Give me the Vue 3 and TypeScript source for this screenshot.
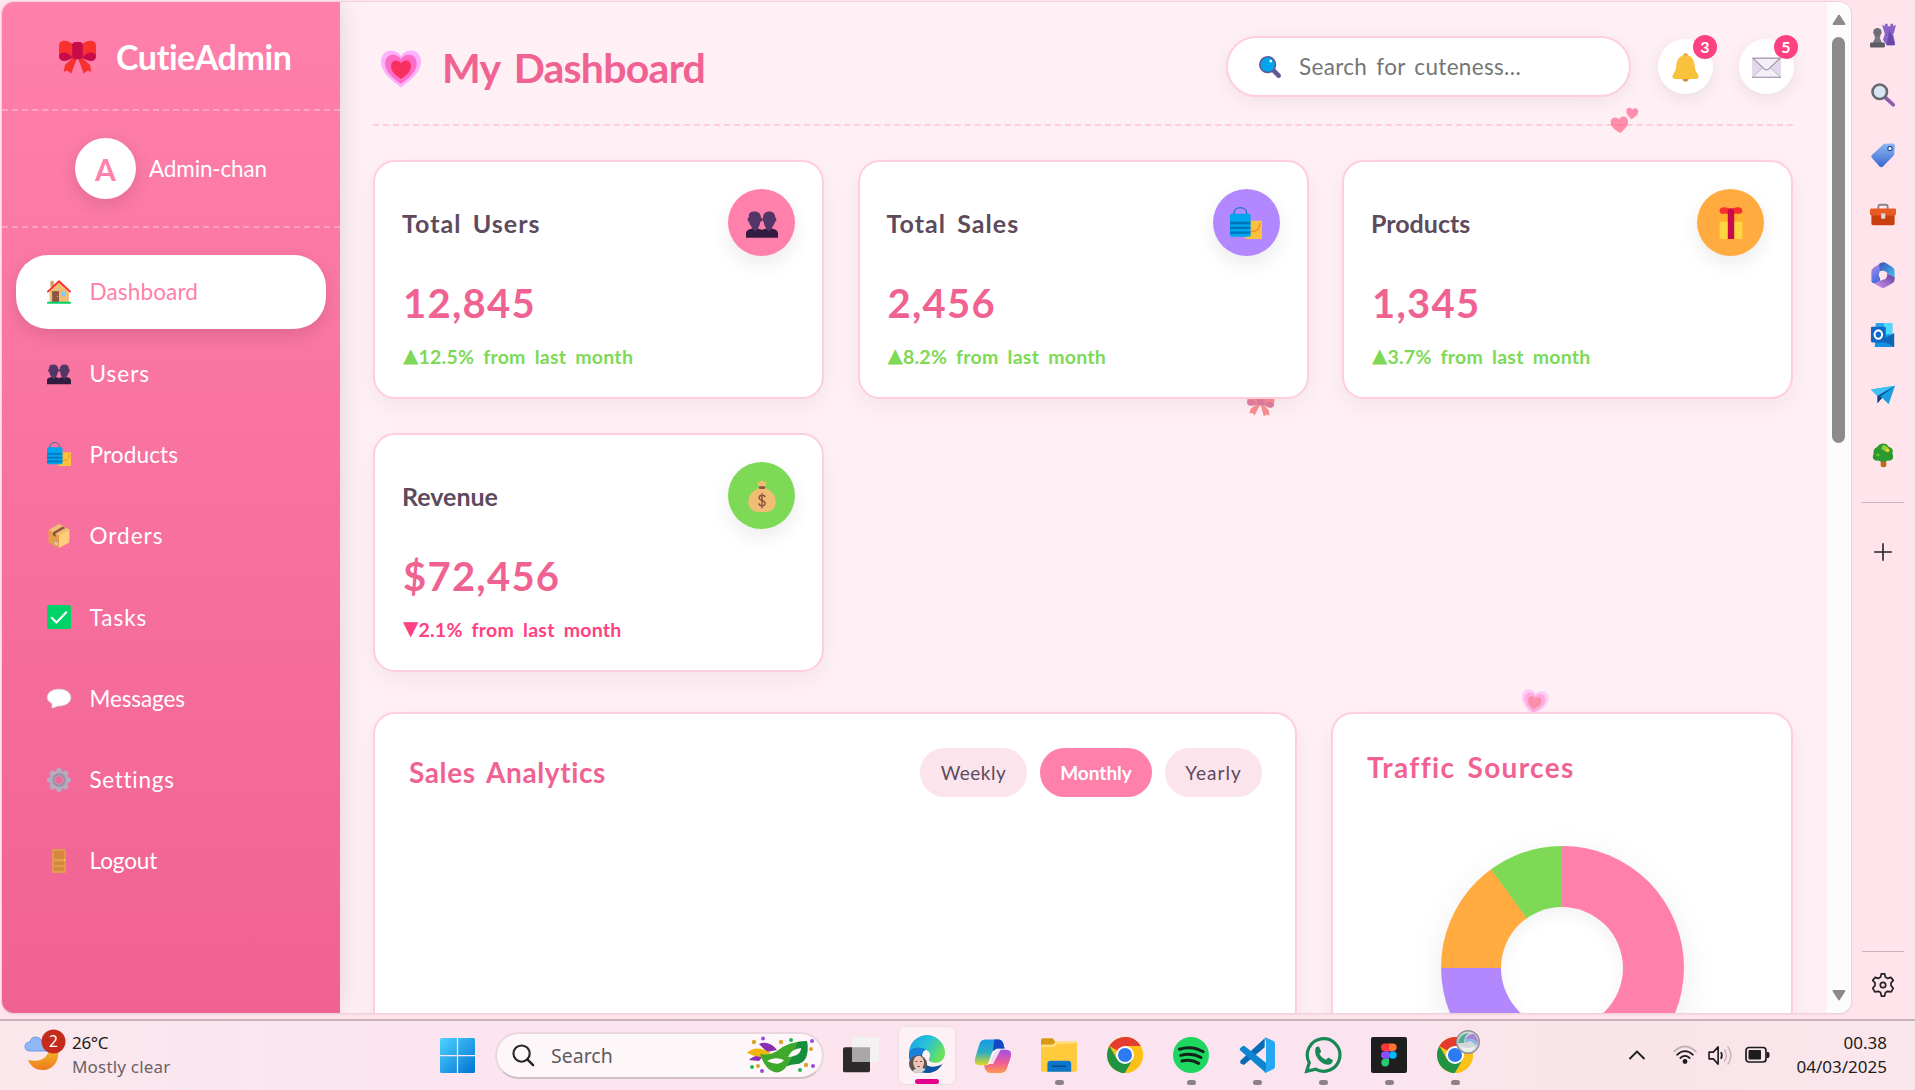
<script setup lang="ts">
interface NavItem { label: string; icon: string; active?: boolean; spacing: string }
interface Stat { title: string; value: string; change: string; up: boolean; icon: string; tone: string }
interface App { icon: string; running: boolean }

const heart = 'M14 26C6 20 0 15 0 8C0 3 3 0 7 0C10 0 12.5 1.5 14 4C15.5 1.5 18 0 21 0C25 0 28 3 28 8C28 15 22 20 14 26z'
const chromeBody = `
  <circle cx="14" cy="14" r="14" fill="#fbc116"/>
  <path d="M14 14L1.9 7A14 14 0 0 1 26.1 7z" fill="#e33b2e"/>
  <path d="M14 0A14 14 0 0 1 26.1 7H14z" fill="#e33b2e"/>
  <path d="M1.9 7A14 14 0 0 0 14 28L20.1 17.5 14 14 7.9 17.5z" fill="#229342"/>
  <path d="M20.1 17.5L14 28A14 14 0 0 0 26.1 7H14z" fill="#fbc116"/>
  <circle cx="14" cy="14" r="7" fill="#fff"/><circle cx="14" cy="14" r="5.5" fill="#2c7bf0"/>`

// Glyphs are drawn on a 28 × 28 grid.
const icons: Record<string, string> = {
  bow: `
    <path d="M10.5 15L4.5 20.5 3.5 25.5 6.5 24.6 9.2 27 13.8 15zM17.5 15L23.5 20.5 24.5 25.5 21.5 24.6 18.8 27 14.2 15z" fill="#f8312f"/>
    <path d="M0 6C0 3 2 2 4 2C7 2 9 3.6 11 5V14L4 16 0 14zM28 6C28 3 26 2 24 2C21 2 19 3.6 17 5V14L24 16 28 14z" fill="#f8312f"/>
    <path d="M0 14C0 12 2 11 4 11C7 11 8 13 11 15C8 16 7 17.400 4 17.400C1.500 17.400 0 16 0 14zM28 14C28 12 26 11 24 11C21 11 20 13 17 15C20 16 21 17.400 24 17.400C26.500 17.400 28 16 28 14z" fill="#ca0b4a"/>
    <rect x="10" y="3" width="8" height="13" rx="2.500" fill="#ca0b4a"/>`,
  heart: `<path d="${heart}" fill="#fcb1ff" transform="translate(0 1)"/><path d="${heart}" fill="#ff6dc6" transform="translate(2.9 4) scale(.79)"/><path d="${heart}" fill="#f92f60" transform="translate(7 8) scale(.5)"/>`,
  hearts: `<path d="${heart}" fill="#ff2e63" transform="translate(0 10) rotate(-6 9 8) scale(.62)"/><path d="${heart}" fill="#ff2e63" transform="translate(15 1) rotate(6 6 6) scale(.43)"/>`,
  house: `
    <path d="M4 1H8V8H4z" fill="#d9a05b"/><path d="M14 1.500L25.500 13V26H3V13z" fill="#f1bd75"/>
    <path d="M6 13H14V26H6z" fill="#8c5543"/><path d="M16.500 13.500H22V19H16.500z" fill="#83cbff"/>
    <path d="M1 13.500L14 1.500 27 13.500" fill="none" stroke="#f8312f" stroke-width="2.200" stroke-linecap="round" stroke-linejoin="round"/>
    <rect x="0" y="25.500" width="28" height="2.200" rx="1" fill="#00d26a"/><circle cx="12.500" cy="19" r=".7" fill="#f9c23c"/>`,
  users: `
    <path d="M0 27V23C0 20 3 19 8 18.500C11 19 13 19.500 14 20C15 19.500 17 19 20 18.500C25 19 28 20 28 23V27z" fill="#321b41"/>
    <path d="M2.500 8C2.500 5 4.500 4 7.500 4C11 4 13 6 13 9C15 10 14 13 12.500 13C12.500 16 10.500 18 10.500 19L8 21.500 5.500 19C5 17 3 16 2.700 13C1 12.500 1 10 2.500 9zM15 9C15 6 17 4 20.500 4C24 4 25.500 6 25.500 9C27 10 27 12.500 25.300 13C25 16 23 17 22.500 19L20 21.500 17.500 19C17.500 18 15.500 16 15.500 13C14 12.500 14 10 15 9z" fill="#533566"/>`,
  bags: `
    <path d="M13 12H28V27.500C28 28 27.500 28 27 28H14.500L13 27z" fill="#f9c23c"/><path d="M18 20.500C22 23 26 20 26 14" fill="none" stroke="#ff822d" stroke-width="1.100"/>
    <path d="M3.500 8V5C3.500-.8 14.500-.8 14.500 5V8" fill="none" stroke="#0074ba" stroke-width="1"/>
    <rect y="6" width="18" height="20" rx="1.200" fill="#00a6ed"/><path d="M0 13h18v2H0zM0 17.200h18v2H0zM0 21.500h18v2H0z" fill="#0074ba"/>`,
  box: `
    <path d="M14 0L26 6.500V21L14 28 2 21.500V7z" fill="#f3ad61"/><path d="M14 13L26 6.500V21.500L14 28z" fill="#ffce7c"/><path d="M2 7L14 13V28L2 21.500z" fill="#e39d4b"/>
    <path d="M14 0L26 6.500 14 13 2 7z" fill="#f1bd75"/><path d="M7 9.500L18.500 3 21.500 4.700 10 11V15L7 13.500z" fill="#8c5543"/><path d="M9 20.500l3.500 1.800v3L9 23.600z" fill="#d3d3d3"/>`,
  check: `<rect width="28" height="28" rx="3" fill="#00d26a"/><path d="M5.500 15L11 20.500 22.500 8.500" fill="none" stroke="#fff" stroke-width="2.500" stroke-linecap="round" stroke-linejoin="round"/>`,
  bubble: `<path d="M14 3.500C22 3.500 28 7.500 28 13.500C28 19.500 22 23.500 14 23.500C11 23.500 9.500 25.500 5.500 26V20.500C2 18.500 0 16.500 0 13.500C0 7.500 6 3.500 14 3.500z" fill="#fff" stroke="#c9a8b4" stroke-width=".8"/>`,
  gear: `
    <g fill="#b4acbc"><circle cx="14" cy="14" r="11"/><rect x="10.800" y="0" width="6.400" height="28" rx="2.500"/><rect x="0" y="10.800" width="28" height="6.400" rx="2.500"/>
    <g transform="rotate(45 14 14)"><rect x="10.800" y="0" width="6.400" height="28" rx="2.500"/><rect x="0" y="10.800" width="28" height="6.400" rx="2.500"/></g></g>
    <circle cx="14" cy="14" r="6.500" fill="#f3669a" stroke="#998ea4" stroke-width="2.600"/><circle cx="14" cy="14" r="5" fill="none" stroke="#b4acbc" stroke-width="1"/>`,
  door: `<rect x="6" width="16" height="28" rx="1.500" fill="#e39d4b"/><rect x="8" y="2" width="12" height="9.500" rx="1" fill="#d3883e"/><rect x="8" y="14.500" width="12" height="4.500" rx="1" fill="#d3883e"/><rect x="8" y="21" width="12" height="4.500" rx="1" fill="#d3883e"/><circle cx="20.300" cy="13" r=".9" fill="#fcd53f"/>`,
  lens: `<path d="M19 19L25 25" stroke="#635994" stroke-width="6" stroke-linecap="round"/><path d="M16 16L20 20" stroke="#635994" stroke-width="3"/><circle cx="11" cy="11" r="10" fill="#00a6ed" stroke="#635994" stroke-width="2"/><circle cx="15" cy="6.500" r="1.700" fill="#fff"/>`,
  bell: `<circle cx="14" cy="24.500" r="3" fill="#d3883e"/><circle cx="14" cy="2.500" r="2.300" fill="#e39d4b"/><path d="M14 2C20 2 22.500 7 23 13C23.300 18 26 20 26.500 22C26.900 24 26 25 24 25H4C2 25 1.100 24 1.500 22C2 20 4.700 18 5 13C5.500 7 8 2 14 2z" fill="#f9c23c"/>`,
  mail: `<rect y="4" width="28" height="20" rx="1.500" fill="#e1d8ec"/><path d="M1 23L11 13.500H17L27 23" fill="#f3eef8" stroke="#b4acbc" stroke-width=".8"/><path d="M.8 5L12 15.500Q14 17 16 15.500L27.200 5z" fill="#f3eef8" stroke="#998ea4" stroke-width="1"/><path d="M0 23.500H28" stroke="#998ea4" stroke-width="1"/>`,
  gift: `<rect x="4" y="11" width="20" height="17" rx="1.200" fill="#fcd53f"/><rect x="2.800" y="6" width="22.400" height="7" rx="1" fill="#ffb02e"/><path d="M14 2C11 0 4-1 4 3C4 5 5 6 7 6H21C23 6 24 5 24 3C24-1 17 0 14 2z" fill="#f8312f"/><path d="M11.200 28V4C11.200 0 16.800 0 16.800 4V28z" fill="#ca0b4a"/>`,
  money: `<path d="M9.500 1.500L12 2 14 0 16 2 18.500 1.500 16.500 6H11.500z" fill="#f1bd75"/><path d="M11 7H17C23 10 26 14 26 19C26 25 22 28 17 28H11C6 28 2 25 2 19C2 14 5 10 11 7z" fill="#f1bd75"/><rect x="11.200" y="5.500" width="5.600" height="2.300" rx="1" fill="#8c5543"/><path d="M16.700 15C16.500 13 11.700 12.500 11.500 15.500C11.500 18.500 16.800 17.500 16.700 20.500C16.500 23.500 11.500 23 11.300 20.500M14 11.500V24.800" fill="none" stroke="#8c5543" stroke-width="1.300"/>`,

  chess: `<g><circle cx="8" cy="11" r="4.500" fill="#6d6d74"/><path d="M4.500 15h7l-1 2 2.500 6H3L5.500 17z" fill="#77777f"/><rect x="0" y="22" width="16" height="5.500" rx="1.500" fill="#5d5d64"/><path d="M13 3l3 1.500V2h3v2.500h3V2h3v2.500L28 3l-2 8-1 2 2 10c0 1-1 2-2 2h-7l-4-6 2-6z" fill="#8a63c9"/><path d="M21 8L27 24c0 1-1 1-2 1h-7z" fill="#6b46ab"/></g>`,
  glass: `<path d="M17 17L25 24.500" stroke="#8d5aa8" stroke-width="4" stroke-linecap="round"/><circle cx="10.500" cy="10.500" r="7.800" fill="#d9e6f2" stroke="#666a70" stroke-width="2.800"/>`,
  tag: `<path d="M15 2L24.500 1.500Q27 1.500 26.800 4L26 14 14 26.500Q12 28 10 26L2 17Q.5 15.500 2 14z" fill="url(#tagFill)"/><circle cx="21.500" cy="7" r="2.300" fill="#fff" stroke="#28509f" stroke-width="1.300"/><defs><linearGradient id="tagFill" x1="0" y1="0" x2="0" y2="1"><stop stop-color="#8db8f5"/><stop offset="1" stop-color="#3a68cf"/></linearGradient></defs>`,
  tools: `<path d="M9 8V5Q9 3 11 3H17Q19 3 19 5V8" fill="none" stroke="#868686" stroke-width="2"/><rect x="1.500" y="10" width="25" height="15" rx="1.800" fill="#c93f10"/><rect y="7" width="28" height="7.500" rx="1.500" fill="#ea5b23"/><rect x="12" y="12" width="4.500" height="6" rx="1" fill="#d7d7d7"/>`,
  office: `
    <defs><linearGradient id="offA" x1="0" y1="0" x2=".3" y2="1"><stop stop-color="#c48be8"/><stop offset="1" stop-color="#3f6fe0"/></linearGradient><linearGradient id="offB" x1="0" y1="0" x2="1" y2="1"><stop stop-color="#3b52b8"/><stop offset="1" stop-color="#43c3f2"/></linearGradient><linearGradient id="offC" x1="0" y1="1" x2="1" y2="0"><stop stop-color="#d49af0"/><stop offset="1" stop-color="#5b3a9c"/></linearGradient></defs>
    <path d="M12 1L4 6Q1.500 8 1.500 11V21Q3 24 7 22.500L11 20 10 8z" fill="url(#offA)"/>
    <path d="M10 2Q14-1 18 1.500L24 5.500Q26.500 7 26.500 10V17L18 11.500Q14 8 10 10.500z" fill="url(#offB)"/>
    <path d="M18 12L26.500 16.500V19Q26.500 21.500 24 23L17 27Q14 29 11 27L4 22.800Q7 23.500 10 20.500L17 18z" fill="url(#offC)"/>
    <circle cx="14" cy="14" r="4.500" fill="#ffe4ec"/>`,
  outlook: `<rect x="6" y="1" width="18" height="26" rx="1.500" fill="#28a8ea"/><path d="M15 1h9v12h-9z" fill="#50d9ff"/><path d="M6 19L26 12V26Q26 27 25 27H5z" fill="#1490df"/><path d="M13 20L26 12V27z" fill="#1066b5"/><rect x="1" y="5" width="16" height="17" rx="1.500" fill="#0f67c7"/><ellipse cx="9" cy="13.500" rx="4" ry="4.500" fill="none" stroke="#fff" stroke-width="2.200"/>`,
  plane: `<path d="M1 8L27 4 20 24 13 17 8 23V15z" fill="#1a9fe0"/><path d="M1 8L27 4 8 15z" fill="#3fc2f2"/><path d="M27 4L8 15V23L11 16z" fill="#0a4d98"/><path d="M8 23L13 17 10.500 16z" fill="#14306b"/>`,
  tree: `<path d="M11.500 17H17.500V26Q14.500 28.500 11.500 26z" fill="#c4661a"/><path d="M9 20C4 21 1.500 17 4 12.500C3 8 6 6 8 5C11 .5 18 .5 20 5C24 6 25.500 9 24 12.500C26.500 17 24 21 19 20C16 22 12 22 9 20z" fill="#2a9a30"/><path d="M14 3l5 2 1 4-4 1-4-3z" fill="#8bd13a"/><circle cx="19" cy="9" r="2" fill="#f2cf2c"/><circle cx="8.500" cy="14" r="1.600" fill="#60c52f"/>`,
  plus: `<path d="M14 4.500V23.500M4.500 14H23.500" stroke="#222" stroke-width="1.700"/>`,
  cog: `<path d="M11.600 5.500L12.300 2.300H15.700L16.400 5.500L18.700 6.800L21.800 5.800L24.300 8.800L22 11.200V14L24.300 16.600L22.200 20.300L18.700 19.700L16.400 21L15.600 24.500H12.400L11.600 21L9.300 19.700L5.800 20.300L3.700 16.600L6 14V11.200L3.700 8.800L6.200 5.800L9.300 6.800z" transform="translate(0 .6)" fill="none" stroke="#222" stroke-width="1.700" stroke-linejoin="round"/><circle cx="14" cy="14" r="2.700" fill="none" stroke="#222" stroke-width="1.700"/>`,

  windows: `<defs><linearGradient id="winFill" x1="0" y1="0" x2="28" y2="28" gradientUnits="userSpaceOnUse"><stop stop-color="#4fd3ff"/><stop offset="1" stop-color="#0072d2"/></linearGradient></defs><path d="M1.200 0H13.500V13.500H0V1.200Q0 0 1.200 0zM14.500 0H26.800Q28 0 28 1.200V13.500H14.500zM0 14.500H13.500V28H1.200Q0 28 0 26.800zM14.500 14.500H28V26.800Q28 28 26.800 28H14.500z" fill="url(#winFill)"/>`,
  taskview: `<rect y="8" width="21" height="19.500" rx="1.500" fill="#2c2a2b"/><rect x="7" y="0" width="21" height="19.500" rx="1.500" fill="#f4f1f2"/><path d="M7 8H21V19.500H8.500Q7 19.500 7 18z" fill="#aaa7a8"/>`,
  edge: `<defs><linearGradient id="edgeTop" x1="0" y1="0" x2="1" y2=".5"><stop stop-color="#1d9be5"/><stop offset=".5" stop-color="#25c2dc"/><stop offset="1" stop-color="#6be15a"/></linearGradient></defs>
    <path d="M0 13A14 14 0 0 1 28 12C28 18 24 20 20 20C16 20 14.500 18 16 16C17.500 13 15 10 12 10C6 9 2 13 0 17z" fill="url(#edgeTop)"/>
    <path d="M0 14C1 8 8 7 13 10C10 11 9 16 12 20C15 24 20 24 26 21C23 26 19 28 14 28C6 28 0 22 0 14z" fill="#0d56a6"/><path d="M0 14C2 8 8 7 13 10C10 11 9 14 10 18H1z" fill="#1583dc"/>
    <circle cx="7" cy="21" r="7" fill="#5e5550"/><ellipse cx="7.500" cy="20" rx="4.200" ry="5.500" fill="#efc6b9"/><path d="M2 27Q7 22 13 25Q10 28 7 28z" fill="#d8d2d2"/><path d="M5 19h1.500M8.500 19H10M6.500 23h2" stroke="#983c44" stroke-width=".8"/>`,
  copilot: `<defs><linearGradient id="coA" x1="0" y1="0" x2="0" y2="1"><stop stop-color="#159be8"/><stop offset=".5" stop-color="#2daec1"/><stop offset="1" stop-color="#e5d720"/></linearGradient><linearGradient id="coB" x1="0" y1="0" x2="0" y2="1"><stop stop-color="#a151e5"/><stop offset=".55" stop-color="#ee5c97"/><stop offset="1" stop-color="#ff9b4d"/></linearGradient></defs>
    <path d="M8 2H18Q21 2 22 5L23 9H17Q14 9 13 13L11 20Q10 22 7 22H4Q-1 22 0 17L3 7Q4 2 8 2z" fill="url(#coA)"/><path d="M15 2H18Q21 2 22 5L23 9H17L14 11z" fill="#1547c5"/>
    <path d="M21 10H24Q29 10 28 15L25 24Q24 28 20 28H12Q8 28 7 22H9Q11 22 12 19L14 14Q16 10 21 10z" fill="url(#coB)"/><path d="M16 10H20L14 21H10L13 13z" fill="#fff" opacity=".8"/>`,
  folder: `<path d="M0 2.500Q0 1 1.500 1H9L11 3.500V7H0z" fill="#d79a12"/><path d="M0 6H9L12 3.500H27Q28 3.500 28 4.500V25.500Q28 27 26.500 27H1.500Q0 27 0 25.500z" fill="#ffcb3d"/><path d="M0 6H9L12 3.500H27V5H13L10 7.500H0z" fill="#ffe08a"/><path d="M5 27V21Q5 18.500 7.500 18.500H21Q23.500 18.500 23.500 21V27z" fill="#0b76cb"/><path d="M8.500 22.700H19.500" stroke="#064c8c" stroke-width="1.200"/>`,
  chrome: chromeBody,
  spotify: `<circle cx="14" cy="14" r="14" fill="#1ed760"/><path d="M5 9.500Q15 6.500 23.500 11.500M6 14.300Q14.500 12 21.800 16M7 18.700Q14 17 20 20.500" fill="none" stroke="#14231a" stroke-width="2.300" stroke-linecap="round"/>`,
  vscode: `<path d="M1 18.500L20 1V8L4 21.500Q3 22 1 20.500z" fill="#0a6bb5"/><path d="M1 8.500L3 7Q4 6.500 5 7.500L21 20V28L1 10.500Q0 9.500 1 8.500z" fill="#0f85d1"/><path d="M20 0L27 3.200Q28 3.700 28 5V23Q28 24.300 27 24.800L20.500 28 19.500 27 21 25V4z" fill="#25a7f2"/>`,
  whatsapp: `<path d="M1.300 26.700L3.300 20A12.700 12.700 0 1 1 8.200 25z" fill="none" stroke="#188954" stroke-width="2.500"/><path d="M8 9.500Q8 7.500 10 7.300L11 7.500 12.500 11Q12.500 12 11.200 13Q13 16.500 16.500 17.700Q17.500 16 18.500 16.200L21.700 18Q21 21.500 17.500 21.500Q13.500 21 10.700 17.800Q7.300 14 8 9.500z" fill="#188954"/>`,
  figma: `<rect width="28" height="28" rx="1.600" fill="#1e1e1e"/><path d="M14 5H10.800A3 3 0 0 0 10.800 11H14z" fill="#ff3737"/><path d="M14 5H17A3 3 0 0 1 17 11H14z" fill="#ff7237"/><path d="M14 11H10.800A3 3 0 0 0 10.800 17H14z" fill="#874fff"/><circle cx="17" cy="14" r="3" fill="#00b6ff"/><path d="M14 17H10.800A3 3 0 1 0 14 20z" fill="#24cb71"/>`,
  chrome2: chromeBody,
}

const nav: NavItem[] = [
  { label: 'Dashboard', icon: 'house', active: true, spacing: 'even' },
  { label: 'Users', icon: 'users', spacing: 'wide' },
  { label: 'Products', icon: 'bags', spacing: 'even' },
  { label: 'Orders', icon: 'box', spacing: 'wide' },
  { label: 'Tasks', icon: 'check', spacing: 'wide' },
  { label: 'Messages', icon: 'bubble', spacing: 'snug' },
  { label: 'Settings', icon: 'gear', spacing: 'loose' },
  { label: 'Logout', icon: 'door', spacing: 'snug' },
]

const stats: Stat[] = [
  { title: 'Total Users', value: '12,845', change: '12.5% from last month', up: true, icon: 'users', tone: 'pink' },
  { title: 'Total Sales', value: '2,456', change: '8.2% from last month', up: true, icon: 'bags', tone: 'purple' },
  { title: 'Products', value: '1,345', change: '3.7% from last month', up: true, icon: 'gift', tone: 'orange' },
  { title: 'Revenue', value: '$72,456', change: '2.1% from last month', up: false, icon: 'money', tone: 'green' },
]

const tools: string[] = ['chess', 'glass', 'tag', 'tools', 'office', 'outlook', 'plane', 'tree']

const apps: App[] = [
  { icon: 'copilot', running: false },
  { icon: 'folder', running: true },
  { icon: 'chrome', running: false },
  { icon: 'spotify', running: true },
  { icon: 'vscode', running: true },
  { icon: 'whatsapp', running: true },
  { icon: 'figma', running: true },
  { icon: 'chrome2', running: true },
]
</script>

<template>
  <div class="desktop">
    <div class="browser">
      <div class="page">
        <aside class="sidebar">
          <div class="brand">
            <svg class="brand-icon" viewBox="0 0 28 28" v-html="icons.bow" />
            <span class="brand-name">CutieAdmin</span>
          </div>
          <div class="profile">
            <div class="avatar">A</div>
            <span class="profile-name">Admin-chan</span>
          </div>
          <nav class="menu">
            <a v-for="item in nav" :key="item.label" class="menu-item" :class="{ active: item.active }">
              <svg class="menu-icon" viewBox="0 0 28 28" v-html="icons[item.icon]" />
              <span :class="item.spacing">{{ item.label }}</span>
            </a>
          </nav>
        </aside>

        <main class="main">
          <svg class="float float-hearts" viewBox="0 0 28 28" v-html="icons.hearts" />
          <svg class="float float-bow" viewBox="0 0 28 28" v-html="icons.bow" />
          <svg class="float float-heart" viewBox="0 0 28 28" v-html="icons.heart" />

          <header class="header">
            <svg class="title-icon" viewBox="0 0 28 28" v-html="icons.heart" />
            <h1 class="title">My Dashboard</h1>
            <div class="search">
              <svg class="search-icon" viewBox="0 0 28 28" v-html="icons.lens" />
              <span class="search-text">Search for cuteness...</span>
            </div>
            <div class="round">
              <svg class="round-icon" viewBox="0 0 28 28" v-html="icons.bell" />
              <span class="badge">3</span>
            </div>
            <div class="round">
              <svg class="round-icon" viewBox="0 0 28 28" v-html="icons.mail" />
              <span class="badge">5</span>
            </div>
          </header>

          <section class="stats">
            <article v-for="stat in stats" :key="stat.title" class="card stat">
              <div class="stat-head">
                <h3 class="stat-title" :class="{ spaced: stat.title.includes(' ') }">{{ stat.title }}</h3>
                <div class="stat-icon" :class="stat.tone">
                  <svg viewBox="0 0 28 28" v-html="icons[stat.icon]" />
                </div>
              </div>
              <div class="stat-value">{{ stat.value }}</div>
              <div class="stat-change" :class="{ down: !stat.up }">
                <span class="arrow">{{ stat.up ? '▲' : '▼' }}</span><span>{{ stat.change }}</span>
              </div>
            </article>
          </section>

          <section class="charts">
            <article class="card sales">
              <h2 class="chart-title sales-title">Sales Analytics</h2>
              <div class="periods">
                <button class="period weekly">Weekly</button>
                <button class="period monthly">Monthly</button>
                <button class="period yearly">Yearly</button>
              </div>
            </article>
            <article class="card traffic">
              <h2 class="chart-title traffic-title">Traffic Sources</h2>
              <div class="donut"><div class="donut-hole" /></div>
            </article>
          </section>
        </main>

        <div class="scrollbar">
          <svg class="scroll-arrow" viewBox="0 0 14 12"><path d="M7 1.500L12.500 10H1.500z" fill="#8b8b8b" stroke="#8b8b8b" stroke-width="1.800" stroke-linejoin="round" /></svg>
          <div class="thumb" />
          <svg class="scroll-arrow last" viewBox="0 0 14 12"><path d="M7 10.500L12.500 2H1.500z" fill="#8b8b8b" stroke="#8b8b8b" stroke-width="1.800" stroke-linejoin="round" /></svg>
        </div>
      </div>

      <aside class="tools">
        <svg v-for="tool in tools" :key="tool" class="tool" viewBox="0 0 28 28" v-html="icons[tool]" />
        <div class="rule" />
        <svg class="tool tool-plus" viewBox="0 0 28 28" v-html="icons.plus" />
        <div class="rule rule-low" />
        <svg class="tool tool-cog" viewBox="0 0 28 28" v-html="icons.cog" />
      </aside>
    </div>

    <footer class="taskbar">
      <div class="weather">
        <svg class="weather-icon" viewBox="0 0 44 44">
          <defs>
            <linearGradient id="moonFill" x1="0" y1="0" x2="0" y2="1"><stop stop-color="#f5b72d" /><stop offset="1" stop-color="#ee7a1c" /></linearGradient>
          </defs>
          <path d="M34 20C36 33 28 41 19 41C12 41 7 38 4 31C14 33 21 31 24 24z" fill="url(#moonFill)" />
          <path d="M6 22Q1 22 1 17.500Q1 13 6 13Q7 8 11.500 8Q16 8 18 12Q23 12 24 17V22z" fill="#8fb7f5" stroke="#6b9ae6" stroke-width="1" />
          <circle cx="29.500" cy="12.500" r="12" fill="#c42b1c" />
          <text x="29.500" y="18" text-anchor="middle" fill="#fff" font-size="15.500" font-family="Noto Sans, sans-serif">2</text>
        </svg>
        <div class="weather-text">
          <span class="temp">26°C</span>
          <span class="cond">Mostly clear</span>
        </div>
      </div>
      <svg class="start" viewBox="0 0 28 28" v-html="icons.windows" />
      <div class="finder">
        <svg class="finder-icon" viewBox="0 0 24 24"><circle cx="10" cy="10" r="8.500" fill="none" stroke="#262626" stroke-width="2.200" /><path d="M16 16L22 22" stroke="#262626" stroke-width="2.600" stroke-linecap="round" /></svg>
        <span class="finder-text">Search</span>
        <svg class="mask" viewBox="0 0 68 38">
          <path d="M12 8Q22 4 30 14L20 16zM2 24Q8 18 16 20L12 25z" fill="#8a2fb0" />
          <path d="M0 17Q8 8 24 17L14 21Q6 20 0 17z" fill="#f1b508" />
          <path d="M13 18Q22 20 30 15Q42 5 60 5Q63 26 50 28Q44 28 40 30Q34 38 27 36Q18 33 13 18z" fill="#3fa92b" />
          <path d="M50 6L60 5Q63 26 50 28Q44 28 40 30Q48 18 50 6z" fill="#158f3b" />
          <path d="M20 25Q28 20 37 24Q32 31 20 25zM41 21Q44 13 54 12Q54 20 41 21z" fill="#fff8fb" />
          <g fill="#d9a52a"><circle cx="7" cy="6" r="2.200" /><circle cx="34" cy="6" r="2.200" /><circle cx="64" cy="13" r="2" /><circle cx="59" cy="29" r="2.200" /><circle cx="11" cy="30" r="2" /></g>
          <g fill="#9b4bd8"><circle cx="16" cy="2.500" r="2" /><circle cx="65" cy="5" r="2" /><circle cx="66" cy="30" r="2" /><circle cx="15" cy="35" r="2" /></g>
          <g fill="#1fb954"><circle cx="44" cy="4" r="2" /><circle cx="5" cy="31" r="2" /><circle cx="53" cy="34" r="2" /></g>
        </svg>
      </div>
      <svg class="taskview" viewBox="0 0 28 28" v-html="icons.taskview" />
      <div class="tile"><svg viewBox="0 0 28 28" v-html="icons.edge" /><i class="current" /></div>
      <div v-for="app in apps" :key="app.icon" class="app">
        <svg class="app-icon" viewBox="0 0 28 28" v-html="icons[app.icon]" />
        <svg v-if="app.icon === 'chrome2'" class="face" viewBox="0 0 24 24">
          <circle cx="12" cy="12" r="11.300" fill="#d3d6da" stroke="#8f9295" stroke-width="1.400" />
          <path d="M2 13Q4 3 13 3Q8 6 8 13z" fill="#4fae93" /><path d="M9 10Q12 3 18 4Q22 8 22 14Q17 7 9 10z" fill="#a486d8" /><path d="M9 12Q15 7 21 15" fill="none" stroke="#80b8ec" stroke-width="2" /><path d="M4 16Q12 20 20 16Q17 22 12 22Q7 22 4 16z" fill="#eef0ef" />
        </svg>
        <i v-if="app.running" class="dot" />
      </div>
      <div class="tray">
        <svg class="chevron" viewBox="0 0 18 12"><path d="M1.500 10L9 2.500 16.500 10" fill="none" stroke="#1c1c1c" stroke-width="1.900" /></svg>
        <svg class="wifi" viewBox="0 0 24 20"><g fill="none" stroke="#1c1c1c" stroke-width="1.700" stroke-linecap="round"><path d="M1 6.500Q12-3.500 23 6.500" stroke="#c2b3b6" /><path d="M4 9.800Q12 2.500 20 9.800M7.300 13Q12 8.800 16.700 13" /></g><circle cx="12" cy="16.500" r="2.400" fill="#1c1c1c" /></svg>
        <svg class="sound" viewBox="0 0 26 22"><path d="M1 7.500H5.500L10.500 2V20L5.500 14.500H1zM13.500 7.500Q15.500 11 13.500 14.500" fill="none" stroke="#1c1c1c" stroke-width="1.700" stroke-linejoin="round" /><path d="M17 4.500Q21 11 17 17.500M20.500 1.500Q27.500 11 20.500 20.500" fill="none" stroke="#c2b3b6" stroke-width="1.500" /></svg>
        <svg class="battery" viewBox="0 0 25 18"><rect x="1" y="1.500" width="20" height="14.500" rx="3" fill="none" stroke="#1c1c1c" stroke-width="1.700" /><rect x="3.500" y="4" width="12.500" height="9.500" rx="1" fill="#1c1c1c" /><path d="M22 6h1q1.500 0 1.500 3t-1.500 3h-1z" fill="#1c1c1c" /></svg>
        <div class="clock"><span class="time">00.38</span><span class="date">04/03/2025</span></div>
      </div>
    </footer>
  </div>
</template>

<style>
body { margin: 0; background: #ffe4ec; overflow: hidden; }
</style>

<style scoped>
* { box-sizing: border-box; }
svg { display: block; flex: none; overflow: visible; }
.desktop { width: 1915px; height: 1090px; display: flex; flex-direction: column; overflow: hidden; background: #ffe4ec; font-family: "Comic Sans MS", Lato, sans-serif; font-variant-ligatures: none; white-space: nowrap; }
.browser { height: 1019px; display: flex; }
.page { width: 1849px; height: 1011px; margin: 2px 0 0 2px; display: flex; overflow: hidden; border-radius: 12px; background: #fff0f5; box-shadow: 0 0 0 1px #efd0db, 0 1px 2px #dcc0ca; }

.sidebar { width: 338px; flex: none; position: relative; z-index: 2; background: linear-gradient(180deg, #ff80ab, #f06292); box-shadow: 0 0 25px rgba(0, 0, 0, .12); color: #fff; }
.brand { height: 109px; display: flex; align-items: center; gap: 20px; padding-left: 57px; padding-top: 2px; border-bottom: 2px dashed rgba(255, 255, 255, .3); }
.brand-icon { width: 37px; height: 37px; }
.brand-name { font-size: 34px; font-weight: 700; letter-spacing: -.4px; }
.profile { height: 117px; display: flex; align-items: center; gap: 13px; padding-left: 73px; border-bottom: 2px dashed rgba(255, 255, 255, .3); }
.avatar { width: 61px; height: 61px; border-radius: 50%; background: #fff; color: #ff80ab; font-size: 30px; font-weight: 700; display: flex; align-items: center; justify-content: center; box-shadow: 0 5px 18px rgba(0, 0, 0, .12); }
.profile-name { font-size: 22.500px; letter-spacing: -.15px; }
.menu { padding: 27px 14px 0; display: flex; flex-direction: column; gap: 7.500px; }
.menu-item { height: 73.800px; display: flex; align-items: center; gap: 18.500px; padding-left: 31px; border-radius: 32px; font-size: 22.500px; color: #fff; }
.menu-item.active { background: #fff; color: #ff80ab; box-shadow: 0 6px 18px rgba(0, 0, 0, .12); }
.menu-icon { width: 24px; height: 24px; }
.even { letter-spacing: .15px; }
.snug { letter-spacing: -.1px; }
.wide { letter-spacing: 1px; }
.loose { letter-spacing: .7px; }

.main { width: 1487px; flex: none; position: relative; padding: 0 34px 0 33px; }
.float { position: absolute; opacity: .5; }
.float-hearts { width: 28px; height: 28px; left: 1271px; top: 105px; z-index: 2; opacity: .5; }
.float-bow { width: 27px; height: 27px; left: 907px; top: 388px; transform: rotate(6deg); }
.float-heart { width: 27px; height: 27px; left: 1181px; top: 687px; transform: rotate(8deg); }
.header { display: flex; align-items: center; padding: 34px 0 27px; margin-bottom: 34px; border-bottom: 2px dashed #ffcddd; }
.title-icon { width: 40px; height: 40px; margin: 4px 0 0 8px; }
.title { margin: 2px auto 0 21px; font-size: 41px; line-height: 50px; font-weight: 700; color: #f06292; word-spacing: 5px; letter-spacing: -.75px; }
.search { width: 405px; height: 61px; display: flex; align-items: center; gap: 18px; padding-left: 31px; border: 2px solid #ffcddd; border-radius: 31px; background: #fff; box-shadow: 0 5px 20px rgba(0, 0, 0, .06); }
.search-icon { width: 22px; height: 22px; }
.search-text { font-size: 22.500px; color: #757575; word-spacing: 3px; letter-spacing: .33px; }
.round { width: 55px; height: 55px; margin-left: 27px; position: relative; display: flex; align-items: center; justify-content: center; border-radius: 50%; background: #fff; box-shadow: 0 5px 18px rgba(0, 0, 0, .08); }
.round:last-child { margin-left: 26px; margin-right: -1px; }
.round-icon { width: 29px; height: 29px; margin-top: 2px; }
.badge { position: absolute; right: -4px; top: -4px; width: 24px; height: 24px; border-radius: 50%; background: #ff4081; color: #fff; font-size: 16px; line-height: 24px; font-weight: 700; text-align: center; }

.card { position: relative; z-index: 1; background: #fff; border: 2px solid #ffcddd; border-radius: 22px; box-shadow: 0 8px 25px rgba(0, 0, 0, .05); }
.stats { display: grid; grid-template-columns: repeat(3, 451px); justify-content: space-between; row-gap: 34px; margin-bottom: 40px; }
.stat { height: 239px; padding: 27px 27px 0 28px; }
.stat-head { display: flex; align-items: center; justify-content: space-between; }
.stat-title { margin: 0 0 0 -1px; font-size: 25px; font-weight: 700; color: #5d4a5d; }
.stat-title.spaced { letter-spacing: 1.050px; word-spacing: 4px; }
.stat-icon { width: 67px; height: 67px; border-radius: 50%; display: flex; align-items: center; justify-content: center; box-shadow: 0 8px 20px rgba(0, 0, 0, .08); }
.stat-icon svg { width: 32px; height: 32px; }
.pink { background: #ff80ab; }
.purple { background: #b388ff; }
.orange { background: #ffab40; }
.green { background: #7ed957; }
.stat-value { margin-top: 20px; line-height: 54px; font-size: 40px; font-weight: 700; color: #f06292; letter-spacing: 1.250px; }
.stat-change { margin-top: 14px; line-height: 26px; height: 26px; font-size: 19.500px; font-weight: 700; color: #7ed957; display: flex; word-spacing: 4px; letter-spacing: .25px; }
.stat-change.down { color: #ff4081; }
.arrow { font: 20px/23px "DejaVu Sans", sans-serif; letter-spacing: 0; }
.charts { display: flex; gap: 34px; }
.sales { width: 924px; height: 480px; padding: 34px 33px 0 34px; display: flex; justify-content: space-between; align-items: flex-start; }
.chart-title { margin: 0; font-weight: 700; font-size: 28px; line-height: 49px; color: #f06292; word-spacing: 4px; }
.sales-title { letter-spacing: .6px; }
.traffic-title { letter-spacing: 1.350px; }
.periods { display: flex; gap: 13px; }
.period { height: 49px; padding: 0; border: 0; border-radius: 25px; background: #fce4ec; color: #5d4a5d; font: 19px "Comic Sans MS", Lato, sans-serif; }
.weekly { width: 107px; letter-spacing: .5px; }
.monthly { width: 112px; background: #ff80ab; color: #fff; font-weight: 700; }
.yearly { width: 97px; letter-spacing: 1px; }
.traffic { width: 462px; height: 480px; padding: 29px 34px 0; }
.donut { width: 243px; height: 243px; margin: 54px auto 0; border-radius: 50%; display: flex; align-items: center; justify-content: center; background: conic-gradient(#ff80ab 0 45%, #b388ff 45% 75%, #ffab40 75% 90%, #7ed957 90%); box-shadow: 0 10px 35px rgba(0, 0, 0, .08); }
.donut-hole { width: 122px; height: 122px; border-radius: 50%; background: #fff; box-shadow: inset 0 5px 18px rgba(0, 0, 0, .06); }

.scrollbar { width: 24px; flex: none; display: flex; flex-direction: column; align-items: center; background: #fcfcfc; padding: 12px 1px 0 0; position: relative; z-index: 1; }
.scroll-arrow { width: 14px; height: 12px; }
.thumb { width: 13px; height: 406px; margin-top: 11px; border-radius: 6.500px; background: #8b8b8b; }
.last { margin-top: 546px; }

.tools { width: 64px; display: flex; flex-direction: column; align-items: center; padding-top: 22px; }
.tool { width: 26px; height: 26px; margin-bottom: 34px; }
.rule { width: 42px; height: 1px; background: #c9b2bb; }
.tool-plus { margin: 36px 0 0; }
.rule-low { margin-top: 386px; }
.tool-cog { width: 28px; height: 28px; margin: 19px 0 0; }

.taskbar { height: 71px; display: flex; align-items: center; padding-bottom: 1px; border-top: 2px solid #c5b2bb; background: linear-gradient(90deg, #fae8ec, #fbe5f1 15%, #fbe4ee 45%, #fbe4f0 72%, #f9e5e8 82%, #fae6ec); font-family: "Segoe UI", "Noto Sans", sans-serif; color: #1c1c1c; }
.weather { width: 440px; display: flex; align-items: center; padding-left: 24px; }
.weather-icon { width: 44px; height: 44px; margin-top: -8px; }
.weather-text { display: flex; flex-direction: column; margin-left: 4px; font-size: 17px; line-height: 24.500px; }
.temp { letter-spacing: -.3px; }
.cond { color: #6b6266; letter-spacing: .2px; }
.start { width: 35px; height: 35px; }
.finder { width: 329px; height: 47px; margin-left: 20px; display: flex; align-items: center; padding: 0 7px 0 15px; border: 2px solid #ead6df; border-bottom-color: #d3bfc8; border-radius: 24px; background: #fdf7fa; }
.finder-icon { width: 23px; height: 23px; }
.finder-text { margin-left: 16px; font-size: 19.500px; color: #5f5a5c; }
.mask { width: 68px; height: 38px; margin-left: auto; }
.taskview { width: 36px; height: 36px; margin: 0 19px; }
.tile { width: 58px; height: 59px; margin-right: 4px; position: relative; display: flex; align-items: center; justify-content: center; border: 1px solid #eddde4; border-radius: 7px; background: #fdf1f6; }
.tile svg { width: 36px; height: 36px; }
.current { position: absolute; left: 16px; bottom: 0; width: 24px; height: 5px; border-radius: 3px; background: #e3008c; }
.app { width: 66px; height: 59px; position: relative; display: flex; align-items: center; justify-content: center; }
.app-icon { width: 36px; height: 36px; }
.face { position: absolute; left: 34px; top: 4px; width: 24px; height: 24px; }
.dot { position: absolute; left: 29px; bottom: 0; width: 9px; height: 5px; border-radius: 3px; background: #8d8087; }
.tray { margin-left: auto; padding-right: 28px; display: flex; align-items: center; }
.chevron { width: 18px; height: 12px; margin-right: 27px; }
.wifi { width: 24px; height: 20px; margin-right: 11px; }
.sound { width: 25px; height: 21px; margin-right: 12px; }
.battery { width: 25px; height: 18px; margin-right: 24px; }
.clock { width: 93px; display: flex; flex-direction: column; align-items: flex-end; font-size: 17px; line-height: 24.500px; }
</style>
